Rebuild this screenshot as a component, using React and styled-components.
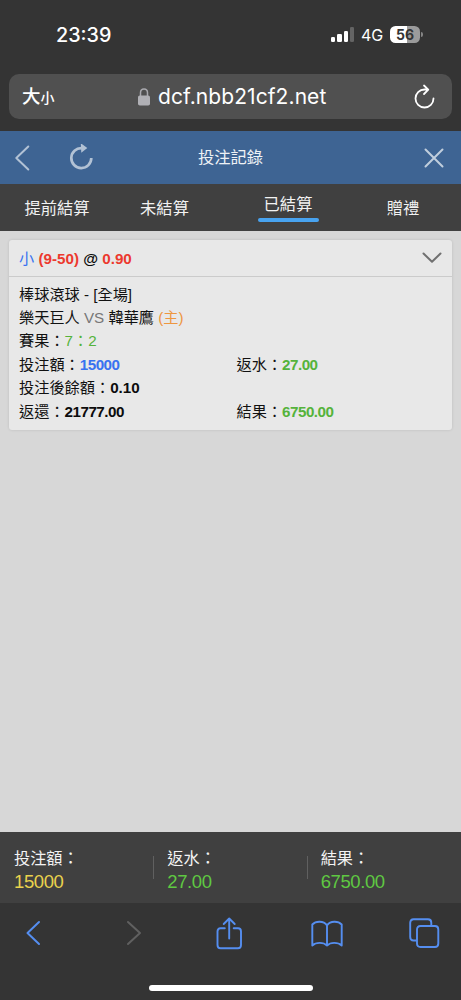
import React from "react";
import styled, { createGlobalStyle } from "styled-components";

const Global = createGlobalStyle`
  * { box-sizing: border-box; }
  html, body { margin: 0; background: #343434; }
  svg { display: block; fill: none; flex: none; }
`;

const Screen = styled.div`
  display: flex;
  flex-direction: column;
  width: 461px;
  height: 1000px;
  overflow: hidden;
  background: #343434;
  color: #111;
  font-family: "Liberation Sans", "Noto Sans CJK TC", sans-serif;
`;

const StatusBar = styled.div`
  display: flex;
  align-items: center;
  height: 74px;
  padding: 0 38px 5px 56px;
  color: #fff;
  font-family: Inter, sans-serif;
`;

const Clock = styled.div`
  flex: 1;
  font-size: 19.8px;
  font-weight: 500;
`;

const Signal = styled.div`
  display: flex;
  align-items: flex-end;
  gap: 2px;
  height: 15px;
`;

const SignalBar = styled.i`
  width: 4.2px;
  height: ${(p) => p.$h}px;
  border-radius: 1.3px;
  background: ${(p) => (p.$off ? "#646464" : "#fff")};
`;

const Network = styled.span`
  margin-left: 7px;
  width: 29px;
  font-size: 16px;
  letter-spacing: -0.1px;
`;

const Battery = styled.span`
  width: 30px;
  height: 17px;
  border-radius: 5.5px;
  background: linear-gradient(90deg, #fff 56%, #9b9b9b 56%);
  color: #343434;
  font-size: 14px;
  font-weight: 700;
  line-height: 17px;
  text-align: center;
`;

const BatteryTip = styled.i`
  width: 2px;
  height: 5px;
  margin-left: 1px;
  border-radius: 0 2px 2px 0;
  background: #858585;
`;

const AddressBar = styled.div`
  display: flex;
  align-items: center;
  flex: none;
  height: 45px;
  margin: 0 9px 12px;
  padding: 0 16px 0 13px;
  border-radius: 10px;
  background: #505050;
  color: #fff;
`;

const TextSize = styled.div`
  display: flex;
  align-items: baseline;
  width: 116px;
  padding-top: 2px;
  font-weight: 500;
  font-size: 18.5px;
  line-height: 24px;
  small { font-size: 14px; }
`;

const Url = styled.div`
  flex: 1;
  margin-left: 8px;
  font: 400 21px/26px Inter, sans-serif;
  white-space: nowrap;
  letter-spacing: 0.08px;
`;

const PageHeader = styled.header`
  display: grid;
  grid-template-columns: 98px 1fr 98px;
  align-items: center;
  height: 53px;
  flex: none;
  background: #3e6493;
  color: #eef2f6;
  font-size: 16.3px;
  text-align: center;
`;

const HeaderTitle = styled.div`
  padding-bottom: 3px;
`;

const HeaderLeft = styled.div`
  display: flex;
  align-items: center;
  gap: 39px;
  padding-left: 14px;
`;

const HeaderRight = styled.div`
  display: flex;
  justify-content: flex-end;
  padding-right: 17px;
`;

const Tabs = styled.nav`
  display: flex;
  flex: none;
  height: 47px;
  background: #404040;
`;

const Tab = styled.div`
  display: flex;
  flex-direction: column;
  align-items: center;
  justify-content: center;
  width: ${(p) => p.$w}px;
  padding-top: 1px;
  color: #f2f2f2;
  font-size: 16.3px;
  line-height: 24px;
  &::after {
    content: "";
    display: ${(p) => (p.$active ? "block" : "none")};
    width: 61px;
    height: 4px;
    margin-top: 2px;
    margin-bottom: 2px;
    border-radius: 2px;
    background: #48a3f0;
  }
`;

const Content = styled.main`
  flex: 1;
  padding: 9px 9px 0;
  background: #d7d7d7;
`;

const Card = styled.section`
  height: 190px;
  border-radius: 3px;
  background: #e8e8e8;
  box-shadow: 0 0 3px rgba(0, 0, 0, 0.12);
  font-size: 15.2px;
`;

const CardHead = styled.div`
  display: flex;
  align-items: center;
  justify-content: space-between;
  height: 37px;
  padding: 0 10px 2px;
  border-bottom: 1px solid #cbcbcb;
`;

const CardBody = styled.div`
  padding: 5.5px 10px;
  line-height: 23.45px;
`;

const Row = styled.div`
  display: grid;
  grid-template-columns: 217.5px 1fr;
  height: 23.45px;
  white-space: nowrap;
`;

const palette = {
  blue: "#3872f0",
  red: "#ec392e",
  green: "#55b33b",
  orange: "#ee963f",
  gray: "#777",
  black: "#0c0c0c",
};

const Tint = styled.span`
  color: ${(p) => palette[p.$c]};
  font-weight: ${(p) => (p.$bold ? 700 : 400)};
  letter-spacing: ${(p) => (p.$tight ? "-0.5px" : "0")};
`;

const Totals = styled.footer`
  display: flex;
  flex: none;
  height: 71px;
  padding: 14px 0 0 1px;
  background: #404040;
`;

const Total = styled.div`
  position: relative;
  width: 153.5px;
  padding-left: 13px;
  color: #f3f3f3;
  font-size: 16.2px;
  line-height: 24px;
  & + &::before {
    content: "";
    position: absolute;
    left: -1px;
    top: 10px;
    width: 1px;
    height: 23px;
    background: #606060;
  }
`;

const Amount = styled.div`
  color: ${(p) => (p.$gold ? "#e9d24d" : "#5fc842")};
  font-size: 18.5px;
  letter-spacing: -0.4px;
  line-height: 24px;
`;

const BrowserBar = styled.div`
  display: flex;
  flex-direction: column;
  align-items: center;
  justify-content: space-between;
  flex: none;
  height: 97px;
  padding-bottom: 9px;
`;

const BrowserActions = styled.div`
  display: flex;
  justify-content: space-between;
  align-items: center;
  width: 100%;
  height: 60px;
  padding: 0 21px 0 17px;
  color: #558ef0;
`;

const HomeIndicator = styled.div`
  width: 164px;
  height: 6px;
  border-radius: 3px;
  background: #fff;
`;

const Line = ({ w, h, d, sw = 1.8, color = "currentColor", fill, cap = "round" }) => (
  <svg width={w} height={h} viewBox={`0 0 ${w} ${h}`} stroke={color} strokeWidth={sw} strokeLinecap={cap} strokeLinejoin="round">
    <path d={d} />
    {fill && <path d={fill} fill={color} stroke="none" />}
  </svg>
);

const Lock = () => (
  <svg width="12" height="18" viewBox="0 0 12 18">
    <path d="M2.5 8V4.8C2.5 2.3 4 1 6 1s3.5 1.3 3.5 3.8V8" stroke="#a9a9ae" strokeWidth="1.5" />
    <rect y="7.5" width="12" height="10" rx="1.8" fill="#b0b0b5" />
  </svg>
);

export default function App() {
  return (
    <Screen>
      <Global />
      <StatusBar>
        <Clock>23:39</Clock>
        <Signal>
          <SignalBar $h={5.5} />
          <SignalBar $h={8.5} />
          <SignalBar $h={11.5} />
          <SignalBar $h={15} $off />
        </Signal>
        <Network>4G</Network>
        <Battery>56</Battery>
        <BatteryTip />
      </StatusBar>

      <AddressBar>
        <TextSize>大<small>小</small></TextSize>
        <Lock />
        <Url>dcf.nbb21cf2.net</Url>
        <Line w={22} h={26} sw={1.8} d="M19.5 14.5A9 9 0 1 1 10.500 5.500H14M10 1.500L14.300 5.600L10 10" />
      </AddressBar>

      <PageHeader>
        <HeaderLeft>
          <Line w={16} h={26} sw={2} color="#b2c2d5" d="M14.3 1.5L2.3 13L14.3 24.5" />
          <Line w={24} h={28} sw={2.7} cap="butt" color="#b2c2d5" d="M22.3 14A10 10 0 1 1 12.800 4.1" fill="M11.8 -0.8L18.300 4L12.3 8.8Z" />
        </HeaderLeft>
        <HeaderTitle>投注記錄</HeaderTitle>
        <HeaderRight>
          <Line w={20} h={20} sw={2} color="#c1cedd" d="M1.500 1.500L18.500 18.500M18.500 1.500L1.500 18.500" />
        </HeaderRight>
      </PageHeader>

      <Tabs>
        <Tab $w={114}>提前結算</Tab>
        <Tab $w={101}>未結算</Tab>
        <Tab $w={146} $active>已結算</Tab>
        <Tab $w={84}>贈禮</Tab>
      </Tabs>

      <Content>
        <Card>
          <CardHead>
            <div>
              <Tint $c="blue">小</Tint> <Tint $c="red" $bold>(9-50)</Tint>{" "}
              <Tint $c="black" $bold>@</Tint> <Tint $c="red" $bold>0.90</Tint>
            </div>
            <Line w={20} h={12} sw={2} color="#707070" d="M1.500 2.500L10 10.800L18.500 2.500" />
          </CardHead>
          <CardBody>
            <Row><div>棒球滾球 - [全場]</div></Row>
            <Row><div>樂天巨人 <Tint $c="gray">VS</Tint> 韓華鷹 <Tint $c="orange">(主)</Tint></div></Row>
            <Row><div>賽果：<Tint $c="green">7：2</Tint></div></Row>
            <Row>
              <div>投注額：<Tint $c="blue" $bold $tight>15000</Tint></div>
              <div>返水：<Tint $c="green" $bold $tight>27.00</Tint></div>
            </Row>
            <Row><div>投注後餘額：<Tint $c="black" $bold>0.10</Tint></div></Row>
            <Row>
              <div>返還：<Tint $c="black" $bold $tight>21777.00</Tint></div>
              <div>結果：<Tint $c="green" $bold $tight>6750.00</Tint></div>
            </Row>
          </CardBody>
        </Card>
      </Content>

      <Totals>
        <Total>投注額：<Amount $gold>15000</Amount></Total>
        <Total>返水：<Amount>27.00</Amount></Total>
        <Total>結果：<Amount>6750.00</Amount></Total>
      </Totals>

      <BrowserBar>
        <BrowserActions>
          <Line w={32} h={26} sw={2} d="M22 2L10.500 13L22 24" />
          <Line w={32} h={26} sw={2} color="#606060" d="M12 2L24 13L12 24" />
          <Line w={30} h={34} sw={1.9} d="M10.800 12.300H6.500Q3.500 12.300 3.500 15.500V29Q3.500 32.300 6.500 32.300H24Q27 32.300 27 29V15.500Q27 12.300 24 12.300H19.700M15.200 22.500V2.500M9.700 8L15.200 2.500L20.700 8" />
          <Line w={32} h={28} sw={1.9} d="M16 6.300C12.500 1.700 5 1.700 1.300 5.500V26.500C5 23 12.500 23 16 26.500C19.500 23 27 23 30.700 26.500V5.500C27 1.700 19.500 1.700 16 6.300V26.500" />
          <Line w={31} h={30} sw={1.9} d="M8 22.500H4.500Q1.200 22.500 1.200 19V4.800Q1.200 1.300 4.500 1.300H19Q22.300 1.300 22.300 4.800V8M11.500 8H26Q29.300 8 29.300 11.500V25.500Q29.300 29 26 29H11.500Q8 29 8 25.500V11.500Q8 8 11.500 8Z" />
        </BrowserActions>
        <HomeIndicator />
      </BrowserBar>
    </Screen>
  );
}
